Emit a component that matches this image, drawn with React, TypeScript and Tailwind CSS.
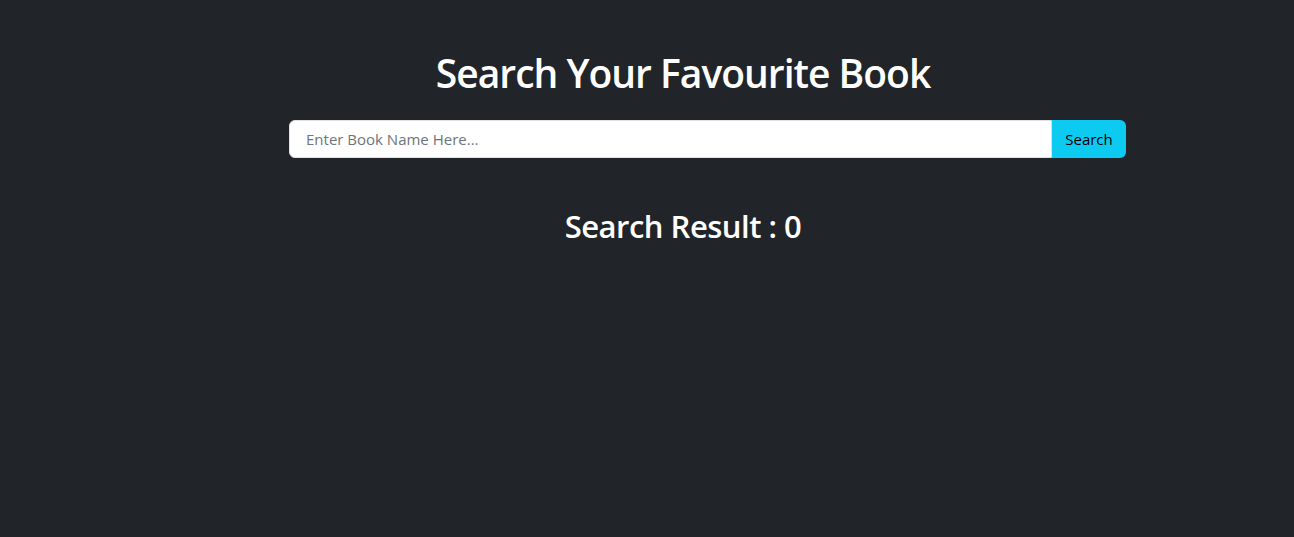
export default function App() {
  return (
    <div
      className="w-full h-[537px] bg-[#212529] text-white overflow-hidden"
      style={{ fontFamily: '"Open Sans", "Noto Sans", sans-serif' }}
    >
      <div className="pt-[50px] pl-[72px] text-center">
        <h1 className="text-[39px] leading-[1.2] font-semibold tracking-[-1px]">Search Your Favourite Book</h1>
      </div>
      <div className="mt-[23px] ml-[289px] w-[837px] flex h-[38px]">
        <input
          className="flex-1 h-full bg-white rounded-l-[6px] border border-[#dee2e6] px-[16px] text-[15px] text-[#212529] placeholder:text-[#6c757d] outline-none"
          placeholder="Enter Book Name Here..."
        />
        <button className="w-[74px] h-full bg-[#0dcaf0] text-black text-[15px] rounded-r-[6px]">Search</button>
      </div>
      <div className="mt-[50px] pl-[72px] text-center">
        <h2 className="text-[31px] leading-[1.2] font-semibold tracking-[-0.5px]">Search Result : 0</h2>
      </div>
    </div>
  );
}
